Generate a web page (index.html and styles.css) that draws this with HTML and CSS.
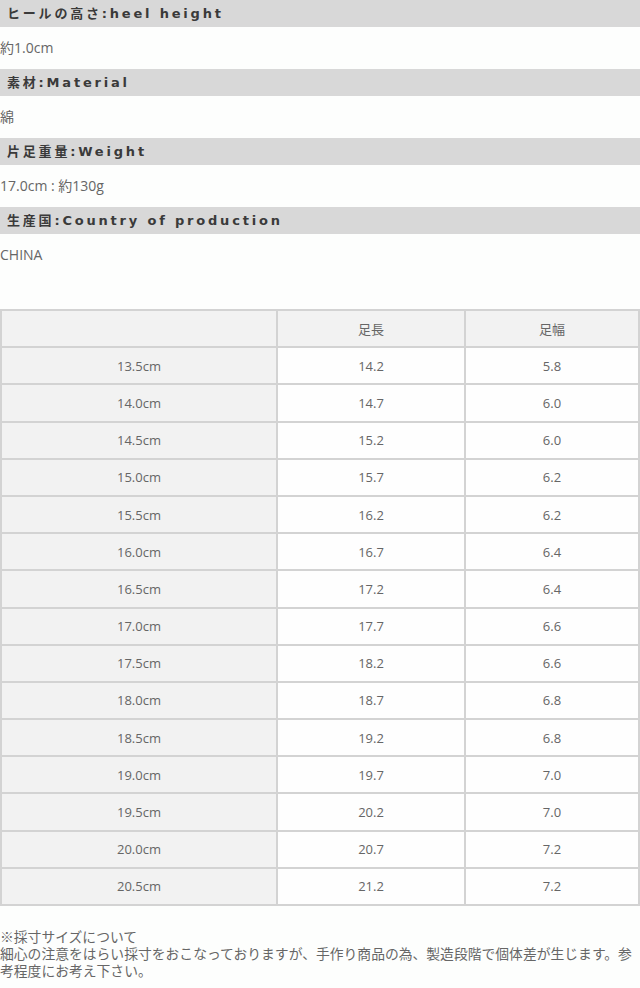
FILE: index.html
```html
<!DOCTYPE html>
<html lang="ja">
<head>
<meta charset="utf-8">
<link rel="stylesheet" href="styles.css">
</head>
<body>
<div class="page">
  <section class="spec">
    <h2 class="spec-head">ヒールの高さ:heel height</h2>
    <p class="spec-val">約1.0cm</p>
    <h2 class="spec-head">素材:Material</h2>
    <p class="spec-val">綿</p>
    <h2 class="spec-head">片足重量:Weight</h2>
    <p class="spec-val">17.0cm : 約130g</p>
    <h2 class="spec-head">生産国:Country of production</h2>
    <p class="spec-val">CHINA</p>
  </section>

  <table class="size-table">
    <colgroup>
      <col class="c1"><col class="c2"><col class="c3">
    </colgroup>
    <thead>
      <tr><th></th><th>足長</th><th>足幅</th></tr>
    </thead>
    <tbody>
      <tr><th>13.5cm</th><td>14.2</td><td>5.8</td></tr>
      <tr><th>14.0cm</th><td>14.7</td><td>6.0</td></tr>
      <tr><th>14.5cm</th><td>15.2</td><td>6.0</td></tr>
      <tr><th>15.0cm</th><td>15.7</td><td>6.2</td></tr>
      <tr><th>15.5cm</th><td>16.2</td><td>6.2</td></tr>
      <tr><th>16.0cm</th><td>16.7</td><td>6.4</td></tr>
      <tr><th>16.5cm</th><td>17.2</td><td>6.4</td></tr>
      <tr><th>17.0cm</th><td>17.7</td><td>6.6</td></tr>
      <tr><th>17.5cm</th><td>18.2</td><td>6.6</td></tr>
      <tr><th>18.0cm</th><td>18.7</td><td>6.8</td></tr>
      <tr><th>18.5cm</th><td>19.2</td><td>6.8</td></tr>
      <tr><th>19.0cm</th><td>19.7</td><td>7.0</td></tr>
      <tr><th>19.5cm</th><td>20.2</td><td>7.0</td></tr>
      <tr><th>20.0cm</th><td>20.7</td><td>7.2</td></tr>
      <tr><th>20.5cm</th><td>21.2</td><td>7.2</td></tr>
    </tbody>
  </table>

  <p class="note">※採寸サイズについて<br>細心の注意をはらい採寸をおこなっておりますが、手作り商品の為、製造段階で個体差が生じます。参考程度にお考え下さい。</p>
</div>
</body>
</html>
```

FILE: styles.css
```css
html, body {
  margin: 0;
  padding: 0;
  background: #fdfefd;
}

.page {
  width: 640px;
  font-family: "Open Sans", "Noto Sans CJK JP", sans-serif;
  color: #666;
}

.spec {
  display: flex;
  flex-direction: column;
}

.spec-head {
  margin: 0;
  height: 27px;
  line-height: 27px;
  padding-left: 7px;
  background: #d8d8d8;
  color: #3a3a3a;
  font-family: "DejaVu Sans", "Noto Sans CJK JP", sans-serif;
  font-size: 13px;
  font-weight: bold;
  letter-spacing: 2.8px;
}

.spec-val {
  margin: 0;
  height: 42px;
  line-height: 42px;
  font-size: 14px;
  color: #666;
}

.size-table {
  margin-top: 33px;
  width: 638px;
  border-collapse: collapse;
  table-layout: fixed;
  border: 2px solid #d0d0d0;
  font-size: 13px;
  color: #666;
}

.c1 { width: 276px; }
.c2 { width: 188px; }
.c3 { width: 174px; }

.size-table th,
.size-table td {
  border: 2px solid #d3d3d3;
  height: 35.2px;
  padding: 0;
  text-align: center;
  font-weight: normal;
  vertical-align: middle;
}

.size-table thead th,
.size-table tbody th {
  background: #f2f2f2;
}

.size-table td {
  background: #fefefe;
}

.note {
  margin: 22px 0 0;
  font-size: 13.8px;
  line-height: 17px;
  color: #666;
}
```
